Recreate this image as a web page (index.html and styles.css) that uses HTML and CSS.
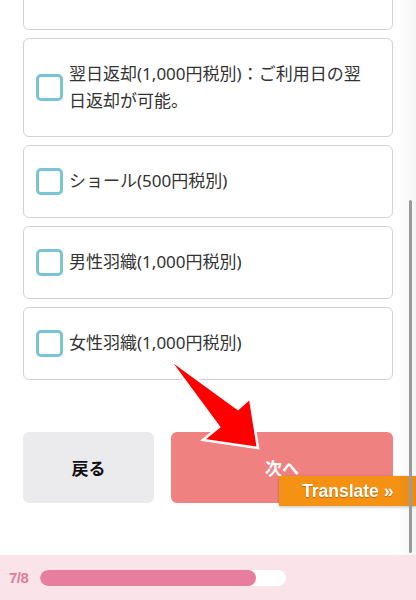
FILE: index.html
```html
<!DOCTYPE html>
<html lang="ja">
<head>
<meta charset="utf-8">
<title>オプション選択</title>
<link rel="stylesheet" href="styles.css">
</head>
<body>
<div class="page">
  <div class="list">
    <div class="opt opt-tall"><span class="box"></span></div>
    <label class="opt"><span class="box"></span><span class="txt">翌日返却(1,000円税別)：ご利用日の翌日返却が可能。</span></label>
    <label class="opt"><span class="box"></span><span class="txt">ショール(500円税別)</span></label>
    <label class="opt"><span class="box"></span><span class="txt">男性羽織(1,000円税別)</span></label>
    <label class="opt"><span class="box"></span><span class="txt">女性羽織(1,000円税別)</span></label>
  </div>
  <div class="actions">
    <button class="btn back">戻る</button>
    <button class="btn next">次へ</button>
  </div>
</div>
<div class="progress">
  <span class="step">7/8</span>
  <div class="track"><div class="fill" style="width:87.8%"></div></div>
</div>
<div class="translate">Translate »</div>
<div class="edge"></div>
<div class="thumb"></div>
<svg class="arrow" width="416" height="600" viewBox="0 0 416 600">
  <polygon points="168,358 238,409 250,398 258,448 203,440 219,427" fill="#ff0000" stroke="#ffffff" stroke-width="2.5" stroke-linejoin="miter"/>
</svg>
</body>
</html>
```
FILE: styles.css
```css
html, body {
  margin: 0;
  padding: 0;
  width: 416px;
  height: 600px;
  overflow: hidden;
  background: #ffffff;
  font-family: "Noto Sans", "Noto Sans CJK JP", sans-serif;
  color: #333333;
}
.page {
  padding: 0 23px;
}
.list {
  margin-top: -69px;
  display: flex;
  flex-direction: column;
  gap: 8px;
}
.opt {
  display: flex;
  align-items: center;
  gap: 6px;
  border: 1px solid #d2d2d2;
  border-radius: 6px;
  padding: 22px 26px 22px 12px;
  font-size: 17px;
  line-height: 26.5px;
}
.opt-tall {
  padding-top: 35px;
  padding-bottom: 35px;
}
.box {
  flex: none;
  width: 27px;
  height: 27px;
  box-sizing: border-box;
  border: 3px solid #7ac4d8;
  border-radius: 5px;
  background: #ffffff;
}
.txt {
  flex: 1;
}
.actions {
  margin-top: 52px;
  display: grid;
  grid-template-columns: 131px 1fr;
  gap: 17px;
}
.btn {
  height: 71px;
  border: none;
  border-radius: 6px;
  font-family: "Noto Sans", "Noto Sans CJK JP", sans-serif;
  font-size: 17px;
  font-weight: 700;
}
.back {
  background: #ebebee;
  color: #111111;
}
.next {
  background: #f08181;
  color: #ffffff;
}
.progress {
  position: fixed;
  left: 0;
  right: 0;
  bottom: 0;
  height: 45px;
  background: #fbe3ea;
  display: flex;
  align-items: center;
  padding-left: 9px;
  gap: 12px;
}
.step {
  font-family: "Liberation Sans", Arial, sans-serif;
  font-weight: 700;
  font-size: 15px;
  color: #e07c9c;
  letter-spacing: -0.5px;
}
.track {
  width: 246px;
  height: 16px;
  border-radius: 8px;
  background: #ffffff;
  overflow: hidden;
}
.fill {
  height: 100%;
  border-radius: 8px;
  background: #e87e9e;
}
.translate {
  position: fixed;
  left: 279px;
  top: 476px;
  width: 137px;
  height: 30px;
  box-sizing: border-box;
  padding-left: 23px;
  background: #f59113;
  color: #ffffff;
  font-family: "Liberation Sans", Arial, sans-serif;
  font-weight: 700;
  font-size: 17.5px;
  line-height: 30px;
  text-shadow: 0 1px 1px rgba(0,0,0,0.25);
  box-shadow: 0 1px 3px rgba(0,0,0,0.25);
}
.edge {
  position: fixed;
  top: 0;
  right: 0;
  width: 18px;
  height: 555px;
  background: linear-gradient(to right, rgba(0,0,0,0), rgba(0,0,0,0.045));
}
.thumb {
  position: fixed;
  left: 409px;
  top: 200px;
  width: 3px;
  height: 353px;
  border-radius: 2px;
  background: #9a9a9a;
}
.arrow {
  position: fixed;
  left: 0;
  top: 0;
  pointer-events: none;
}
```
